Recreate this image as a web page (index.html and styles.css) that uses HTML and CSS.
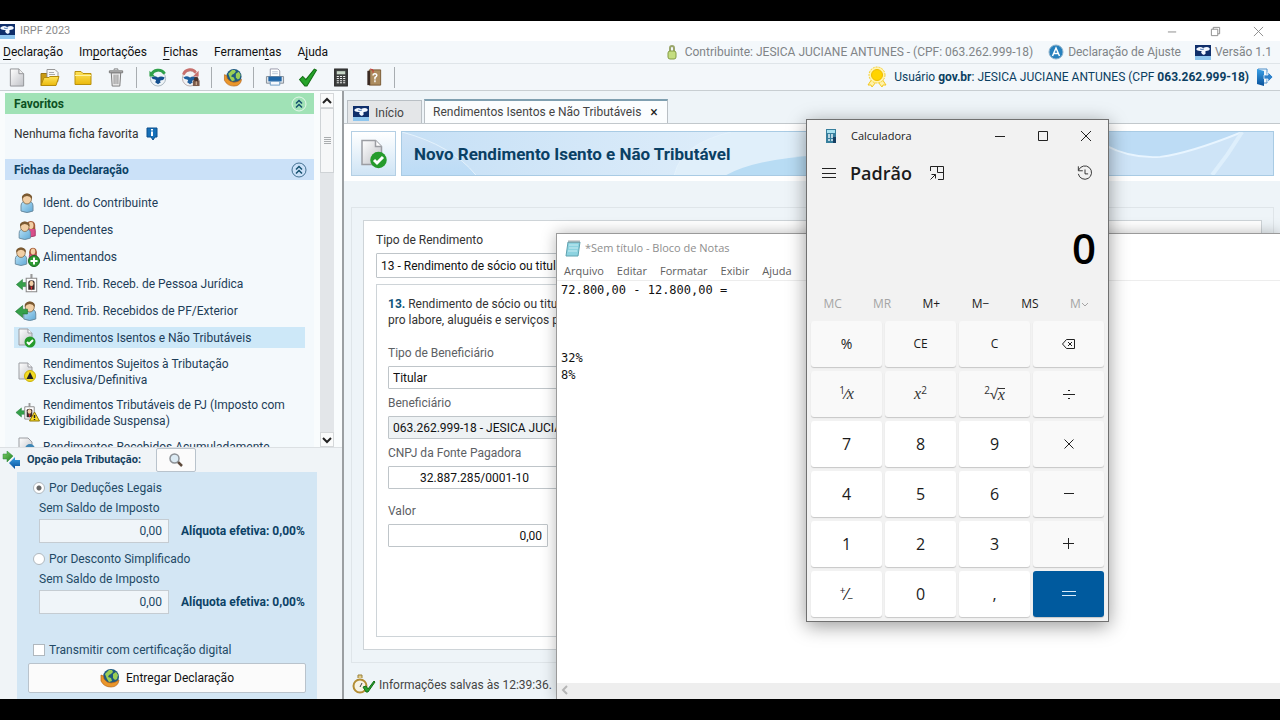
FILE: index.html
```html
<!DOCTYPE html>
<html lang="pt-BR">
<head>
<meta charset="utf-8">
<title>IRPF 2023</title>
<link rel="stylesheet" href="styles.css">
</head>
<body>
<svg class="defs" aria-hidden="true">
  <defs>
    <linearGradient id="gPaper" x1="0" y1="0" x2="1" y2="1"><stop offset="0" stop-color="#fff"/><stop offset="1" stop-color="#bfc1c6"/></linearGradient>
    <linearGradient id="gFolder" x1="0" y1="0" x2="0" y2="1"><stop offset="0" stop-color="#ffe45a"/><stop offset="1" stop-color="#eab90c"/></linearGradient>
    <linearGradient id="gBody" x1="0" y1="0" x2="1" y2="1"><stop offset="0" stop-color="#b9e2f7"/><stop offset="1" stop-color="#5fa9d6"/></linearGradient>
    <linearGradient id="gGreen" x1="0" y1="0" x2="1" y2="1"><stop offset="0" stop-color="#7fd06a"/><stop offset="1" stop-color="#1e7f1e"/></linearGradient>
    <linearGradient id="gBlue" x1="0" y1="0" x2="0" y2="1"><stop offset="0" stop-color="#3aa0e6"/><stop offset="1" stop-color="#08509a"/></linearGradient>
    <symbol id="brand" viewBox="0 0 16 16">
      <rect width="16" height="12" y="1" fill="#0f2f6b"/><rect y="12" width="16" height="4" fill="#8fc6ee"/>
      <path d="M1 5q2-2 4-2 2 0 3 1 2-1 4-1 2 0 3 2-1 2-4 2l-1 1 1 1-2 2-2-1-1-2 1-1-2 0q-3 0-4-2z" fill="#f3f8ff"/><path d="M5 5q2 1 4 0" stroke="#5f86bd" fill="none"/>
    </symbol>
    <symbol id="page" viewBox="0 0 18 20"><path d="M2 1h9l5 5v13H2z" fill="url(#gPaper)" stroke="#909296"/><path d="M11 1v5h5" fill="#eee" stroke="#909296"/></symbol>
    <symbol id="open" viewBox="0 0 20 18"><path d="M1 5h6v12H1z" fill="#c99a12" stroke="#9a7410"/><path d="M7 1h8l3 3v9H7z" fill="#f7f7f7" stroke="#999"/><path d="M9 4h5M9 6h6M9 8h6" stroke="#aaa"/><path d="M4 9h5l1-1h9l-3 9H1z" fill="url(#gFolder)" stroke="#b48a0a"/></symbol>
    <symbol id="folder" viewBox="0 0 20 18"><path d="M2 3h6l2 2h8v11H2z" fill="url(#gFolder)" stroke="#b9900b"/><path d="M2 7h16" stroke="#fff3a0"/></symbol>
    <symbol id="trash" viewBox="0 0 16 20"><path d="M3 5l1 14h8l1-14z" fill="#ececec" stroke="#777"/><path d="M1 3h14v2H1z" fill="#bbb" stroke="#777"/><path d="M6 2V1h4v1" stroke="#777" fill="none"/><path d="M6 7v10M8 7v10M10 7v10" stroke="#888"/></symbol>
    <symbol id="recover" viewBox="0 0 20 20"><circle cx="10" cy="11" r="8" fill="#eef4f8" stroke="#a8b4bd"/><path d="M3 10q3-2 5-1l2 1q3-2 7 0-1 3-4 3l-1 1 1 1-3 2-3-2 1-2-1-1q-3 0-4-2z" fill="#134f8f"/><path d="M3 7C5 2 13 0 17 6" fill="none" stroke="#2fa04a" stroke-width="3"/><path d="M1 3v6h6z" fill="#2fa04a"/></symbol>
    <symbol id="save" viewBox="0 0 20 20"><circle cx="9" cy="11" r="8" fill="#f2f2f4" stroke="#b8abab"/><path d="M2 10q3-2 5-1l2 1q3-2 7 0-1 3-4 3l-1 1 1 1-3 2-3-2 1-2-1-1q-3 0-4-2z" fill="#1d5f9f"/><path d="M2 7C4 1 12 0 15 5" fill="none" stroke="#c8706d" stroke-width="3"/><path d="M18 3v6h-6z" fill="#c8706d"/><path d="M12 13h7v6h-7z" fill="#7b5a4a"/><circle cx="15.500" cy="12" r="2.500" fill="#4b3028"/><path d="M15 14h1v4h-1z" fill="#e8c8a8"/></symbol>
    <symbol id="globe" viewBox="0 0 20 20"><circle cx="11" cy="9" r="8" fill="#1f5a80"/><path d="M5 6l4-4 3 0 1 2-2 2-2 1-1 2 3 1 1 3-3 1-2-3zM13 6l3-2 2 3-1 4-2 1-2-2 0-2z" fill="#9bce55"/><path d="M1 7q3 0 3 4 3 4 7 4 4 0 8-3-1 7-8 7-7 0-10-6z" fill="#ea962a" stroke="#b5651a" stroke-width=".7"/></symbol>
    <symbol id="print" viewBox="0 0 20 20"><path d="M5 1h8l2 2v7H5z" fill="#fff" stroke="#99a"/><path d="M7 4h6M7 6h6" stroke="#b8c4d4"/><path d="M1 9h18v7H1z" fill="#dde3e9" stroke="#858d96"/><path d="M3 9h14v5H3z" fill="#1f65a6"/><path d="M5 14h10v4H5z" fill="#f5f9fd" stroke="#6c9bc4"/></symbol>
    <symbol id="check" viewBox="0 0 18 18"><path d="M1 11l3-3 3 3 8-10 2 1-9 15H6z" fill="#26a52a" stroke="#147017"/></symbol>
    <symbol id="calc" viewBox="0 0 14 18"><path d="M1 1h12v16H1z" fill="#3d403f" stroke="#222"/><path d="M3 3h8v3H3z" fill="#c7d6c7"/><path d="M3 8h8M3 10h8M3 12h8M3 14h8" stroke="#eee" stroke-dasharray="2 1"/></symbol>
    <symbol id="help" viewBox="0 0 16 20"><path d="M3 2h12v16H3z" fill="#ad8d5f" stroke="#7a5a35"/><path d="M1 3h3v15H1z" fill="#3b2a22"/><path d="M4 1l3 1v3" stroke="#c33" fill="none"/><path d="M7 8q0-2 2-2 2 0 2 2 0 1-2 2v2M9 13v2" stroke="#fff" stroke-width="1.500" fill="none"/></symbol>
    <symbol id="lock" viewBox="0 0 10 16"><path d="M3 8V4q0-2 2-2t2 2v4" fill="none" stroke="#9aa66c" stroke-width="2"/><rect x="1" y="7" width="8" height="8" rx="2" fill="#c4dd80" stroke="#849c44"/></symbol>
    <symbol id="ajuste" viewBox="0 0 16 16"><circle cx="8" cy="8" r="7" fill="#2680bd" stroke="#8fb3cc"/><path d="M4.500 12L8 4l3.500 8M6 9.500h4" stroke="#fff" stroke-width="1.500" fill="none"/></symbol>
    <symbol id="medal" viewBox="0 0 22 22"><path d="M6 13l-4 6 3 0 1 2 4-5M16 13l4 6-3 0-1 2-4-5" fill="#fff2a8" stroke="#f3c71c"/><circle cx="11" cy="9" r="8" fill="#fff3b0" stroke="#f5cf30" stroke-dasharray="2 1"/><circle cx="11" cy="9" r="5.500" fill="#ffd400" stroke="#eebc00"/></symbol>
    <symbol id="exit" viewBox="0 0 18 20"><path d="M3 2h9v14H3z" fill="#eef6fc" stroke="#4f8fc9"/><path d="M2 2l7 2v15l-7-2z" fill="url(#gBlue)"/><path d="M9 8h4V5l5 5-5 5v-3H9z" fill="#2f82cb" stroke="#fff" stroke-width=".7"/></symbol>
    <symbol id="person" viewBox="0 0 14 20"><path d="M1 18V13q0-5 6-5t6 5v5q-6 3-12 0z" fill="url(#gBody)" stroke="#6a8ba0"/><ellipse cx="7" cy="6" rx="4.500" ry="5" fill="#f2cfa5" stroke="#75562f" stroke-width=".7"/><path d="M2 6q-1-5 5-5.500 6 .5 5 5.500-2-3-5-3T2 6z" fill="#7b5a32"/></symbol>
    <symbol id="woman" viewBox="0 0 14 20"><path d="M2 18v-6q0-4 5-4t5 4v6q-5 2-10 0z" fill="#d94f8a" stroke="#9c3560"/><path d="M2 10Q1 1 7 1t5 9z" fill="#a35a35"/><ellipse cx="7" cy="6" rx="3" ry="4" fill="#f2cfa5"/></symbol>
    <symbol id="couple" viewBox="0 0 18 18"><use href="#woman" x="7" y="0" width="11" height="16"/><use href="#person" x="1" y="1" width="12" height="17"/></symbol>
    <symbol id="child" viewBox="0 0 26 20"><use href="#woman" x="13" y="0" width="12" height="15"/><use href="#person" x="0" y="0" width="14" height="19"/><circle cx="20" cy="14" r="5.500" fill="#2d9a33" stroke="#166a1c"/><path d="M20 10.500v7M16.500 14h7" stroke="#fff" stroke-width="2"/></symbol>
    <symbol id="arrow" viewBox="0 0 10 12"><path d="M0 6l6-5v3h4v4H6v3z" fill="#35a04a" stroke="#1b7030" stroke-width=".5"/></symbol>
    <symbol id="badge" viewBox="0 0 12 18"><path d="M6 0v4" stroke="#999" stroke-width="2"/><path d="M1 4h10v13H1z" fill="#fff" stroke="#888"/><path d="M3 15V8q0-2 3-2t3 2v7z" fill="#3b2a2a"/><ellipse cx="6" cy="9" rx="2" ry="2.500" fill="#f2cfa5"/><path d="M5 12l1 4 1-4z" fill="#d33"/></symbol>
    <symbol id="pj" viewBox="0 0 22 18"><use href="#arrow" x="1" y="4" width="10" height="11"/><use href="#badge" x="9" y="0" width="12" height="17"/></symbol>
    <symbol id="pf" viewBox="0 0 22 18"><use href="#person" x="7" y="0" width="13" height="18"/><use href="#arrow" x="0" y="3" width="12" height="13"/></symbol>
    <symbol id="exempt" viewBox="0 0 18 20"><path d="M1 1h9l4 4v12H1z" fill="url(#gPaper)" stroke="#9b9da2"/><path d="M10 1v4h4" fill="#fff" stroke="#9b9da2"/><circle cx="12" cy="14" r="5.500" fill="#259b2c"/><path d="M9 14l2 2 4-4" stroke="#fff" stroke-width="2" fill="none"/></symbol>
    <symbol id="excl" viewBox="0 0 18 20"><path d="M1 1h9l4 4v12H1z" fill="url(#gPaper)" stroke="#9b9da2"/><path d="M10 1v4h4" fill="#fff" stroke="#9b9da2"/><circle cx="12" cy="14" r="5.500" fill="#f3dc22" stroke="#c9b00c"/><path d="M12 10l3.500 7h-7z" fill="#222"/></symbol>
    <symbol id="susp" viewBox="0 0 25 20"><use href="#pj" width="22" height="18"/><path d="M20 9l5 9H15z" fill="#fadb22" stroke="#8c7406"/><path d="M20 12v3M20 16v1" stroke="#222" stroke-width="1.500"/></symbol>
    <symbol id="accum" viewBox="0 0 18 20"><path d="M1 1h9l4 4v12H1z" fill="url(#gPaper)" stroke="#9b9da2"/><circle cx="12" cy="12" r="5" fill="#3d86b5"/></symbol>
    <symbol id="info" viewBox="0 0 12 14"><path d="M1 1h10v9H9l-2 3-2-3H1z" fill="#1670b8" stroke="#0a4e8c"/><path d="M6 2v1.500M6 4.500V9" stroke="#fff" stroke-width="2"/></symbol>
    <symbol id="collapse" viewBox="0 0 16 16"><circle cx="8" cy="8" r="7" fill="none" stroke="currentColor" opacity=".7"/><path d="M5 7.500l3-3 3 3M5 11.500l3-3 3 3" fill="none" stroke="#14506e" stroke-width="1.500"/></symbol>
    <symbol id="swap" viewBox="0 0 18 18"><path d="M1 3h4V0l6 5-6 6V8H1z" fill="url(#gGreen)" stroke="#2b8a3c" stroke-width=".5"/><path d="M18 9h-5V6l-6 6 6 6v-3h5z" fill="url(#gBlue)"/></symbol>
    <symbol id="loupe" viewBox="0 0 14 14"><path d="M8 8l5 5" stroke="#5e4a3c" stroke-width="2.500"/><circle cx="5.500" cy="5.500" r="4.500" fill="#dcebf4" stroke="#8c9196" stroke-width="1.500"/></symbol>
    <symbol id="watch" viewBox="0 0 24 20"><path d="M6 4V1h4v3" fill="#e4cf8c" stroke="#99803b"/><circle cx="8" cy="12" r="6.500" fill="#f7f3e4" stroke="#b38d34" stroke-width="2"/><path d="M8 13l2-4" stroke="#444"/><path d="M11 13l3-1 2 3 6-8 1 1-7 10h-2z" fill="#27a02c" stroke="#147017"/></symbol>
    <symbol id="note" viewBox="0 0 16 18"><path d="M3 3h12l-2 14H1z" fill="#8dd3e0" stroke="#5fa2b0"/><path d="M4 6h9M4 9h9M3 12h9" stroke="#c9ecf2"/><path d="M4 1v3M6 1v3M8 1v3M10 1v3M12 1v3M14 1v3" stroke="#888" stroke-width=".7"/></symbol>
    <symbol id="calcapp" viewBox="0 0 12 14"><path d="M1 0h10v14H1z" fill="#377f9d"/><path d="M2 1h8v3H2z" fill="#a9e2f0"/><path d="M3 6h2M6 6h2M3 8h2M6 8h2M3 11h2M6 11h2" stroke="#e4f4fa" stroke-width="1.500"/><path d="M8 8h3v6H8z" fill="#163f63"/></symbol>
  </defs>
</svg>

<div class="app">
  <header class="titlebar">
    <svg class="i16"><use href="#brand"/></svg><span>IRPF 2023</span>
    <div class="wctl">
      <button aria-label="Minimizar"><svg viewBox="0 0 12 12"><path d="M1 6.500h9"/></svg></button>
      <button aria-label="Restaurar"><svg viewBox="0 0 12 12"><path d="M1.500 3.500h7v7h-7zM3.500 3.500v-2h7v7h-2"/></svg></button>
      <button aria-label="Fechar"><svg viewBox="0 0 12 12"><path d="M1 1l10 10M11 1L1 11"/></svg></button>
    </div>
  </header>
  <div class="menubar">
    <nav class="menus">
      <button><u>D</u>eclaração</button><button>Im<u>p</u>ortações</button><button><u>F</u>ichas</button><button>Ferramen<u>t</u>as</button><button>A<u>j</u>uda</button>
    </nav>
    <div class="status">
      <svg class="ilock"><use href="#lock"/></svg><span class="who">Contribuinte: JESICA JUCIANE ANTUNES - (CPF: 063.262.999-18)</span>
      <svg class="i16"><use href="#ajuste"/></svg><span class="kind">Declaração de Ajuste</span>
      <svg class="i16"><use href="#brand"/></svg><span>Versão 1.1</span>
    </div>
  </div>
  <div class="toolbar">
    <button aria-label="Nova"><svg><use href="#page"/></svg></button>
    <button aria-label="Abrir"><svg><use href="#open"/></svg></button>
    <button aria-label="Pasta"><svg><use href="#folder"/></svg></button>
    <button aria-label="Excluir"><svg><use href="#trash"/></svg></button>
    <i class="sep"></i>
    <button aria-label="Restaurar cópia"><svg><use href="#recover"/></svg></button>
    <button aria-label="Gravar cópia"><svg><use href="#save"/></svg></button>
    <i class="sep"></i>
    <button aria-label="Entregar"><svg><use href="#globe"/></svg></button>
    <i class="sep"></i>
    <button aria-label="Imprimir"><svg><use href="#print"/></svg></button>
    <button aria-label="Verificar"><svg><use href="#check"/></svg></button>
    <button aria-label="Calculadora"><svg><use href="#calc"/></svg></button>
    <button aria-label="Ajuda"><svg><use href="#help"/></svg></button>
    <i class="sep"></i>
    <div class="user"><svg class="i22"><use href="#medal"/></svg><span>Usuário <b>gov.br</b>: JESICA JUCIANE ANTUNES (CPF <b>063.262.999-18)</b></span><svg class="iexit"><use href="#exit"/></svg></div>
  </div>

  <div class="main">
    <aside class="sidebar">
      <div class="scroller">
        <div class="panels">
          <h2 class="head green">Favoritos<svg class="i16"><use href="#collapse"/></svg></h2>
          <p class="none">Nenhuma ficha favorita <svg class="iinfo"><use href="#info"/></svg></p>
          <h2 class="head blue">Fichas da Declaração<svg class="i16"><use href="#collapse"/></svg></h2>
          <ul class="list">
            <li><svg><use href="#person"/></svg><span>Ident. do Contribuinte</span></li>
            <li><svg><use href="#couple"/></svg><span>Dependentes</span></li>
            <li><svg><use href="#child"/></svg><span>Alimentandos</span></li>
            <li><svg><use href="#pj"/></svg><span>Rend. Trib. Receb. de Pessoa Jurídica</span></li>
            <li><svg><use href="#pf"/></svg><span>Rend. Trib. Recebidos de PF/Exterior</span></li>
            <li class="on"><svg><use href="#exempt"/></svg><span>Rendimentos Isentos e Não Tributáveis</span></li>
            <li class="two"><svg><use href="#excl"/></svg><span>Rendimentos Sujeitos à Tributação<br>Exclusiva/Definitiva</span></li>
            <li class="two"><svg><use href="#susp"/></svg><span>Rendimentos Tributáveis de PJ (Imposto com<br>Exigibilidade Suspensa)</span></li>
            <li><svg><use href="#accum"/></svg><span>Rendimentos Recebidos Acumuladamente</span></li>
          </ul>
        </div>
        <div class="sbar">
          <button aria-label="Subir"><svg viewBox="0 0 10 10"><path d="M1 7l4-4 4 4"/></svg></button>
          <div class="thumb"></div>
          <button class="down" aria-label="Descer"><svg viewBox="0 0 10 10"><path d="M1 3l4 4 4-4"/></svg></button>
        </div>
      </div>
      <section class="option">
        <div class="opthead"><svg class="iswap"><use href="#swap"/></svg><b>Opção pela Tributação:</b><button aria-label="Comparar"><svg><use href="#loupe"/></svg></button></div>
        <div class="optbox">
          <label class="pick"><input type="radio" name="t" checked>Por Deduções Legais</label>
          <label class="sub" for="v1">Sem Saldo de Imposto</label>
          <div class="amount"><input id="v1" value="0,00" readonly><b>Alíquota efetiva: 0,00%</b></div>
          <label class="pick second"><input type="radio" name="t">Por Desconto Simplificado</label>
          <label class="sub" for="v2">Sem Saldo de Imposto</label>
          <div class="amount"><input id="v2" value="0,00" readonly><b>Alíquota efetiva: 0,00%</b></div>
          <label class="pick cert"><input type="checkbox">Transmitir com certificação digital</label>
          <button class="send"><svg><use href="#globe"/></svg>Entregar Declaração</button>
        </div>
      </section>
    </aside>

    <main class="content">
      <div class="tabs">
        <button class="tab"><svg class="i16"><use href="#brand"/></svg>Início</button>
        <button class="tab active">Rendimentos Isentos e Não Tributáveis<span class="x">×</span></button>
      </div>
      <div class="banner">
        <div class="bicon"><svg><use href="#exempt"/></svg></div>
        <div class="bhead">
          <svg class="art" viewBox="0 0 873 45" preserveAspectRatio="none">
            <defs>
              <linearGradient id="gArt" x1="0" y1="0" x2="0" y2="1"><stop offset="0" stop-color="#cfe2f5"/><stop offset="1" stop-color="#bcdcf6"/></linearGradient>
              <linearGradient id="gArt2" x1="0" y1="0" x2="1" y2="0"><stop offset="0" stop-color="#c6e0f6"/><stop offset="1" stop-color="#e0eefa"/></linearGradient>
            </defs>
            <path d="M0 0h873v45H0z" fill="#cee4f7"/><path d="M0 0h360v45H0z" fill="url(#gArt2)"/>
            <path d="M0 0Q50 14 74 45H0z" fill="url(#gArt)"/>
            <path d="M273 45Q280 12 330 0H420V45z" fill="#e0effa"/><path d="M325 45Q355 28 420 24V45z" fill="#b8dcf4"/>
            <path d="M705 0H840Q790 22 760 26 725 28 705 14z" fill="#bddcf5"/>
            <path d="M705 14Q730 28 760 26 790 22 842 0" fill="none" stroke="#e8f5ff" stroke-width="2"/>
            <path d="M842 0Q828 24 812 45" fill="none" stroke="#deeffc" stroke-width="4"/>
            <path d="M273 45Q280 12 330 0M0 0Q50 14 74 45" fill="none" stroke="#e4f2fc" stroke-width="1"/>
          </svg>
          <h1>Novo Rendimento Isento e Não Tributável</h1>
        </div>
      </div>
      <div class="frame">
        <form class="sheet">
          <label for="tipo">Tipo de Rendimento</label>
          <select id="tipo"><option>13 - Rendimento de sócio ou titular de microempresa</option></select>
          <div class="card">
            <p><b>13.</b> Rendimento de sócio ou titular<br>pro labore, aluguéis e serviços prestados</p>
            <div class="field"><label for="ben">Tipo de Beneficiário</label><select id="ben"><option>Titular</option></select></div>
            <div class="field"><label for="nome">Beneficiário</label><select id="nome" class="grey"><option>063.262.999-18 - JESICA JUCIANE ANTUNES</option></select></div>
            <div class="field"><label for="cnpj">CNPJ da Fonte Pagadora</label><input id="cnpj" class="cnpj" value="32.887.285/0001-10"></div>
            <div class="field last"><label for="valor">Valor</label><input id="valor" class="valor" value="0,00"></div>
          </div>
        </form>
      </div>
      <footer class="saved"><svg><use href="#watch"/></svg>Informações salvas às 12:39:36.</footer>
    </main>
  </div>

  <section class="notepad">
    <header><svg><use href="#note"/></svg>*Sem título - Bloco de Notas</header>
    <nav><button>Arquivo</button><button>Editar</button><button>Formatar</button><button>Exibir</button><button>Ajuda</button></nav>
    <textarea aria-label="Texto" spellcheck="false">72.800,00 - 12.800,00 =



32%
8%</textarea>
    <div class="hbar"><svg viewBox="0 0 8 10"><path d="M6 1L2 5l4 4"/></svg></div>
  </section>

  <section class="calc">
    <header><svg class="capp"><use href="#calcapp"/></svg><span>Calculadora</span>
      <div class="cwin">
        <button aria-label="Minimizar"><svg viewBox="0 0 12 12"><path d="M1 6.500h10"/></svg></button>
        <button aria-label="Maximizar"><svg viewBox="0 0 12 12"><path d="M1.500 1.500h9v9h-9z"/></svg></button>
        <button aria-label="Fechar"><svg viewBox="0 0 12 12"><path d="M1 1l10 10M11 1L1 11"/></svg></button>
      </div>
    </header>
    <div class="mode">
      <button aria-label="Menu"><svg class="burger" viewBox="0 0 16 12"><path d="M1 1.500h14M1 6.500h14M1 10.500h14"/></svg></button>
      <h2>Padrão</h2>
      <button aria-label="Manter visível"><svg class="pin" viewBox="0 0 16 16"><path d="M1.500 6V1.500h13v13H9M8.500 1.500v6h6M1.500 14.500l5-5M2.500 9.500h4v4"/></svg></button>
      <button class="hist" aria-label="Histórico"><svg class="pin" viewBox="0 0 18 18"><path d="M2 5.500A7.500 7.500 0 1 1 1.500 10M1.500 1.500v5h5M9 5v5h3.500"/></svg></button>
    </div>
    <output>0</output>
    <div class="mem"><button disabled>MC</button><button disabled>MR</button><button>M+</button><button>M−</button><button>MS</button><button disabled>M<svg viewBox="0 0 8 6"><path d="M1 1l3 3 3-3"/></svg></button></div>
    <div class="keys">
      <button class="op pct">%</button><button class="op">CE</button><button class="op">C</button><button class="op" aria-label="Apagar"><svg width="14" height="12" viewBox="0 0 14 12"><path d="M4.500 1.500h8v9h-8l-4-4.500zM6 4l4 4M10 4L6 8"/></svg></button>
      <button class="op fn"><sup>1</sup>⁄<i>x</i></button><button class="op fn"><i>x</i><sup>2</sup></button><button class="op fn"><sup>2</sup>√<i class="rad">x</i></button><button class="op" aria-label="Dividir"><svg width="14" height="14" viewBox="0 0 14 14"><path d="M1 7.500h12M6 3.500h2M6 11.500h2"/></svg></button>
      <button>7</button><button>8</button><button>9</button><button class="op" aria-label="Multiplicar"><svg width="14" height="14" viewBox="0 0 14 14"><path d="M2.500 2.500l9 9M11.500 2.500l-9 9"/></svg></button>
      <button>4</button><button>5</button><button>6</button><button class="op" aria-label="Subtrair"><svg width="12" height="12" viewBox="0 0 12 12"><path d="M1 5.500h10"/></svg></button>
      <button>1</button><button>2</button><button>3</button><button class="op" aria-label="Somar"><svg width="12" height="12" viewBox="0 0 12 12"><path d="M0 5.500h11M5.500 0v11"/></svg></button>
      <button class="sign"><sup>+</sup>⁄<sub>−</sub></button><button>0</button><button>,</button><button class="eq" aria-label="Igual"><svg width="14" height="8" viewBox="0 0 14 8"><path d="M0 1.500h14M0 5.500h14"/></svg></button>
    </div>
  </section>
</div>
</body>
</html>
```

FILE: styles.css
```css
* { box-sizing: border-box; }
html, body { height: 100%; margin: 0; }
body { background: #000; padding: 21px 0; font: 12px/16px Roboto, "Liberation Sans", sans-serif; color: #333; }
button, input, select, textarea { font: inherit; color: inherit; margin: 0; }
button { background: none; border: 0; padding: 0; }
h1, h2, p, ul { margin: 0; padding: 0; }
.defs { position: absolute; width: 0; height: 0; }
.i16 { width: 16px; height: 16px; flex: none; }

.app { position: relative; height: 100%; display: flex; flex-direction: column; background: #f3f7fa; overflow: hidden; }
.titlebar { flex: none; height: 20px; background: #fff; display: flex; align-items: center; color: #8b8b8b; font-size: 11px; line-height: 14px; }
.titlebar .i16 { margin: 0 5px 0 -1px; }
.wctl { margin-left: auto; display: flex; }
.wctl button { width: 43px; height: 18px; display: grid; place-items: center; }
.wctl svg { width: 11px; height: 11px; fill: none; stroke: #888; }

.menubar { flex: none; height: 23px; display: flex; align-items: center; justify-content: space-between; background: #f4f8fb; border-bottom: 1px solid #dfe5e9; }
.menus { display: flex; gap: 16px; padding-left: 3px; color: #111; }
.menus u { text-underline-offset: 3px; }
.status { display: flex; align-items: center; color: #808487; padding-right: 8px; white-space: nowrap; }
.ilock { width: 10px; height: 16px; margin-right: 8px; }
.who { margin-right: 15px; }
.status .i16 { margin-right: 4px; }
.kind { margin-right: 14px; }

.toolbar { flex: none; height: 27px; display: flex; align-items: center; border-bottom: 1px solid #c8ced2; }
.toolbar button { width: 33px; height: 24px; display: grid; place-items: center; }
.toolbar button svg { width: 20px; height: 19px; }
.sep { width: 1px; height: 21px; margin: 0 4px; background: #a8adb1; }
.user { margin-left: auto; display: flex; align-items: center; color: #0b3f62; padding-right: 7px; white-space: nowrap; }
.i22 { width: 22px; height: 22px; margin-right: 6px; }
.iexit { width: 18px; height: 20px; margin-left: 6px; }

.main { flex: 1; min-height: 0; display: flex; }
.sidebar { flex: none; width: 344px; display: flex; flex-direction: column; border-right: 2px solid #9b9fa2; background: #f0f4f7; color: #1d3d58; }
.scroller { flex: 1; min-height: 0; display: flex; overflow: hidden; background: #f9fcfd; border-bottom: 1px solid #dce0e3; padding: 2px 8px 0 5px; justify-content: space-between; }
.panels { width: 309px; overflow: hidden; background: #f4f9fc; }
.head { height: 21px; padding: 0 7px 0 9px; display: flex; align-items: center; justify-content: space-between; font-size: 12px; }
.green { background: #a0e2b6; color: #0c5022; }
.green svg { color: #fff; }
.blue { background: #cbe1f8; color: #0c4266; }
.none { height: 45px; padding: 0 9px 6px; display: flex; align-items: center; gap: 8px; color: #333; }
.iinfo { width: 12px; height: 14px; }
.list { list-style: none; padding: 12px 9px 0; }
.list li { display: flex; align-items: center; height: 21px; margin-bottom: 6px; gap: 3px; white-space: nowrap; }
.list li.on { background: #cde8f8; }
.list li.two { height: 35px; }
.list svg { width: 26px; height: 20px; flex: none; }
.sbar { width: 14px; display: flex; flex-direction: column; background: #e3e6e9; }
.sbar button { height: 15px; background: #fafbfb; border: 1px solid #d5d8da; display: grid; place-items: center; }
.sbar button svg { width: 10px; height: 10px; fill: none; stroke: #222; stroke-width: 2; }
.thumb { height: 65px; border: 1px solid #cfd3d6; background: repeating-linear-gradient(#a9acae 0 1px, #f6f7f8 1px 2px) center / 7px 8px no-repeat, #f6f7f8; }
.down { margin-top: auto; }

.option { flex: none; color: #234a66; }
.opthead { display: flex; align-items: center; height: 24px; padding-left: 2px; color: #14415f; }
.opthead b { width: 129px; font-size: 11px; }
.iswap { width: 18px; height: 18px; margin-right: 7px; }
.opthead button, .send { background: #fbfbfb; border: 1px solid #b9c3cc; border-radius: 2px; }
.opthead button { width: 40px; height: 24px; display: grid; place-items: center; }
.opthead button svg { width: 14px; height: 14px; }
.optbox { margin: 0 25px 0 17px; padding: 7px 11px 6px; background: #d3e6f4; display: flex; flex-direction: column; }
.pick { display: flex; align-items: center; gap: 4px; height: 18px; padding-left: 5px; }
.pick input { appearance: none; width: 12px; height: 12px; background: #fff; border: 1px solid #b0b8be; }
.pick input[type=radio] { border-radius: 50%; }
.pick input:checked { background: radial-gradient(#666 0 2px, #fff 3px); }
.sub { padding: 3px 11px; }
.amount { display: flex; align-items: center; gap: 12px; padding-left: 11px; height: 24px; color: #0c4266; white-space: nowrap; }
.amount input { width: 130px; height: 24px; border: 1px solid #c5ccd2; background: #f0f5f9; text-align: right; padding: 0 6px; color: #234a66; }
.second { margin-top: 7px; }
.cert { margin-top: 27px; }
.send { height: 30px; margin-top: 4px; display: flex; align-items: center; justify-content: center; gap: 6px; color: #111; }
.send svg { width: 20px; height: 20px; }

.content { flex: 1; min-width: 0; display: flex; flex-direction: column; background: #eef4f8; }
.tabs { display: flex; align-items: flex-end; gap: 2px; height: 33px; padding-left: 3px; border-bottom: 1px solid #c2c8cc; }
.tab { display: flex; align-items: center; height: 23px; border: 1px solid #b9bfc4; border-bottom: 0; background: #e4e6e8; width: 75px; padding: 2px 0 0 5px; gap: 6px; color: #444; white-space: nowrap; }
.active { width: auto; background: #fbfdfe; border-top: 2px solid #7f9fb0; height: 24px; padding: 0 9px 0 8px; gap: 9px; }
.x { font-size: 14px; color: #222; }
.banner { display: flex; gap: 5px; padding: 7px 6px 5px 7px; background: #fff; }
.bicon { width: 45px; height: 45px; border: 1px solid #b4cfe4; background: linear-gradient(#fff, #cfe4f5); display: grid; place-items: center; }
.bicon svg { width: 28px; height: 30px; }
.bhead { flex: 1; position: relative; display: flex; align-items: center; border: 1px solid #a9cbe4; padding-left: 12px; }
.art { position: absolute; inset: 0; width: 100%; height: 100%; }
.bhead h1 { position: relative; font-size: 17px; line-height: 20px; color: #0a4064; }
.frame { flex: 1; min-height: 0; margin: 26px 6px 0 7px; padding: 12px 11px; border: 1px solid #dfe5e9; display: flex; }
.sheet { flex: 1; background: #fff; border: 1px solid #ced4d8; padding: 11px 12px 12px; display: flex; flex-direction: column; }
.sheet select, .sheet input { appearance: none; width: 100%; height: 23px; border: 1px solid #bfc5c9; background: #fff; border-radius: 1px; padding: 0 4px; color: #111; }
.sheet > select { height: 25px; margin: 5px 0 6px; }
.card { flex: 1; border: 1px solid #ced4d8; padding: 11px; display: flex; flex-direction: column; gap: 6px; }
.card p { margin-bottom: 11px; }
.card b { color: #0c5378; }
.field { display: flex; flex-direction: column; gap: 5px; color: #5c6064; }
.field .grey { background: #eef2f4; }
.field .cnpj { padding-left: 31px; }
.last { margin-top: 8px; }
.field .valor { width: 160px; text-align: right; padding-right: 5px; }
.saved { flex: none; height: 36px; padding: 0 8px 5px; display: flex; align-items: flex-end; gap: 3px; color: #444; line-height: 18px; }
.saved svg { width: 24px; height: 20px; }

.notepad { position: absolute; left: 556px; top: 212px; right: 0; bottom: 0; background: #fff; border: 1px solid #9a9a9a; border-width: 1px 0 0 1px; box-shadow: 0 0 14px rgba(0,0,0,.28); display: flex; flex-direction: column; }
.notepad header { height: 28px; display: flex; align-items: center; gap: 4px; padding-left: 8px; color: #8e8e8e; font: 11px/16px "Open Sans", sans-serif; }
.notepad header svg { width: 16px; height: 18px; }
.notepad nav { height: 19px; display: flex; gap: 13px; padding-left: 7px; border-bottom: 1px solid #ededed; color: #606060; font: 11px/18px "Open Sans", sans-serif; }
.notepad textarea { flex: 1; border: 0; outline: 0; resize: none; padding: 1px 4px; font: 12px/17px "DejaVu Sans Mono", monospace; color: #111; background: transparent; }
.hbar { height: 16px; background: #eee; padding-left: 4px; }
.hbar svg { width: 8px; height: 10px; fill: none; stroke: #b5b5b5; stroke-width: 2; }

.calc { position: absolute; left: 806px; top: 98px; width: 303px; background: #f2f2f2; border: 1px solid #707070; box-shadow: 0 4px 18px rgba(0,0,0,.4); padding-bottom: 4px; font-family: "Open Sans", sans-serif; color: #1b1b1b; }
.calc svg { fill: none; stroke: #222; }
.calc header { height: 31px; display: flex; align-items: center; padding-left: 18px; font-size: 11px; }
.calc .capp { width: 12px; height: 14px; margin-right: 14px; stroke: none; }
.cwin { margin-left: auto; display: flex; padding-right: 1px; }
.cwin button { width: 43px; height: 30px; display: grid; place-items: center; }
.cwin svg { width: 12px; height: 12px; }
.mode { height: 43px; display: flex; align-items: center; padding: 0 15px 0 14px; }
.mode h2 { font-size: 18px; line-height: 24px; font-weight: 600; margin: 0 17px 0 13px; }
.mode button { display: grid; place-items: center; }
.burger { width: 16px; height: 12px; }
.pin { width: 16px; height: 16px; }
.hist { margin-left: auto; }
.calc output { display: block; height: 92px; padding: 26px 12px 0; text-align: right; font-size: 42px; line-height: 56px; font-weight: 600; color: #000; }
.mem { display: grid; grid-template-columns: repeat(6, 1fr); height: 35px; padding: 0 4px 0 1px; font-size: 12px; }
.mem button:disabled { color: #a5a5a5; }
.mem svg { width: 8px; height: 6px; stroke: #a5a5a5; }
.keys { display: grid; grid-template-columns: repeat(4, 1fr); grid-auto-rows: 46px; gap: 4px 3px; padding: 0 4px; font-size: 16px; }
.keys button { background: #fff; border-radius: 3px; box-shadow: 0 1px 1px rgba(0,0,0,.18); display: flex; align-items: center; justify-content: center; }
.keys .op { background: #f9f9f9; font-size: 12px; }
.keys .pct { font-size: 14px; }
.keys sup, .keys sub { font-size: 10px; line-height: 10px; }
.keys sup { align-self: center; padding-bottom: 8px; }
.keys sub { padding-top: 8px; }
.fn i { font: italic 16px/16px "Liberation Serif", serif; }
.keys .fn { font-size: 14px; color: #333; }
.fn .rad { border-top: 1px solid #333; line-height: 11px; }
.keys .sign { font-size: 16px; }
.keys .eq { background: #005a9e; }
.keys .eq svg { stroke: #d8ebfa; }
```
